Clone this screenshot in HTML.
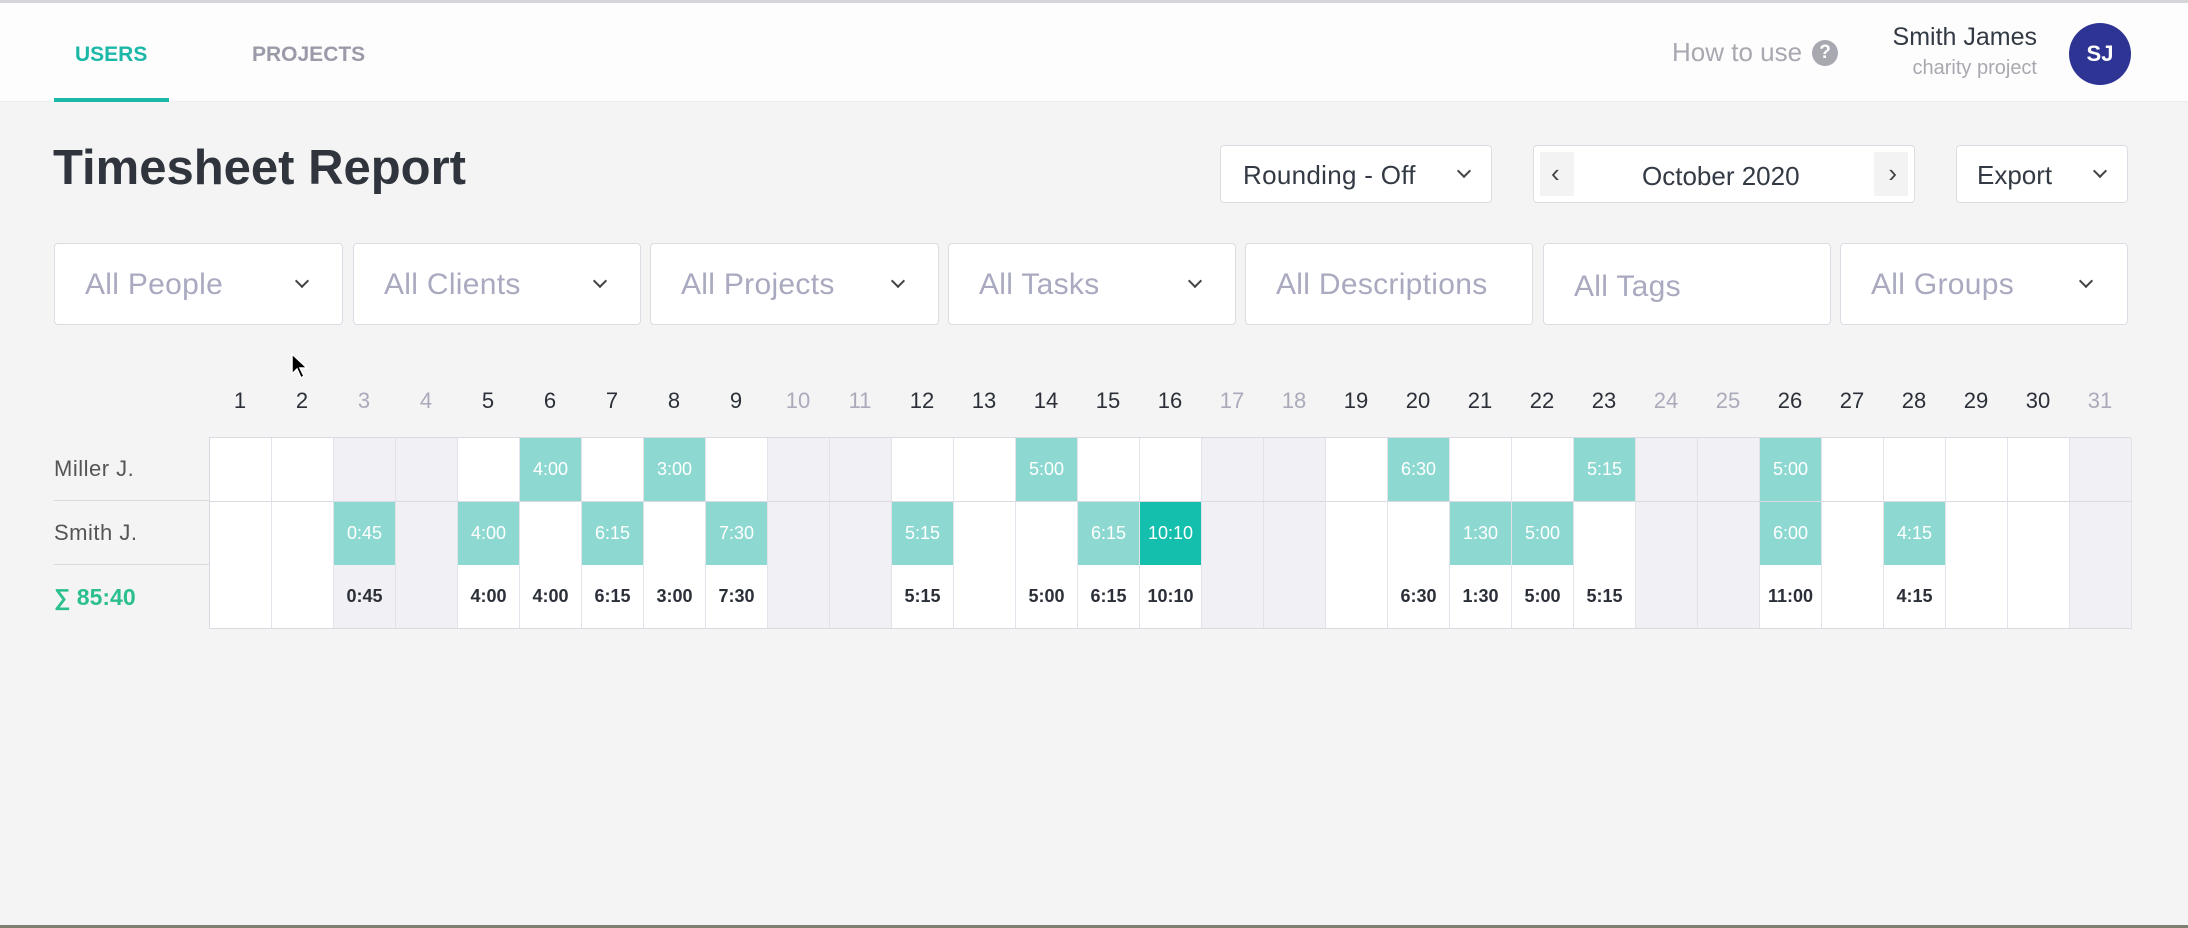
<!DOCTYPE html>
<html><head><meta charset="utf-8">
<style>
*{box-sizing:border-box;margin:0;padding:0}
body{width:2188px;height:928px;background:#f4f4f4;font-family:"Liberation Sans",sans-serif;position:relative;overflow:hidden;color:#333a44}
.hdr{position:absolute;left:0;top:0;width:2188px;height:102px;background:#fdfdfd;border-top:3px solid #d4d6da;border-bottom:1px solid #eee}
.a{position:absolute}
.box{position:absolute;background:#fff;border:1px solid #dcdce4;border-radius:4px}
.chev{position:absolute;width:10px;height:10px;border-right:2px solid #444;border-bottom:2px solid #444;transform:rotate(45deg)}
.f{font-size:30px;color:#a9a9c0;top:0;line-height:82px;left:30px;letter-spacing:.3px}
.grid{position:absolute;left:209px;width:1922px;display:grid;grid-template-columns:repeat(31,62px)}
.grid div{height:64px;border-right:1px solid #e2e2ea;border-bottom:1px solid #dadae2;background:#fff;display:flex;align-items:center;justify-content:center;font-size:18px;color:#fff}
.grid div.w{background:#f1f1f5}
.grid div.t{background:#8dd9d1}
.grid div.d{background:#14bfae}
.tot div{color:#2b2f38;font-weight:bold;font-size:18px}
.days{position:absolute;left:209px;top:388px;width:1922px;display:grid;grid-template-columns:repeat(31,62px)}
.days span{text-align:center;font-size:22px;color:#2b2f38}
.days span.w{color:#aab}
</style></head><body>
<div class="hdr">
 <div class="a" style="left:75px;top:40px;font-size:21px;color:#1bb8a8;font-weight:bold">USERS</div>
 <div class="a" style="left:54px;top:95px;width:115px;height:4px;background:#1bb8a8"></div>
 <div class="a" style="left:252px;top:40px;font-size:21px;color:#9a9aa8;font-weight:bold">PROJECTS</div>
 <div class="a" style="left:1672px;top:34px;font-size:26px;color:#a8a8b0">How to use</div>
 <div class="a" style="left:1812px;top:37px;width:26px;height:26px;border-radius:50%;background:#a8a8b0;color:#fff;font-size:19px;font-weight:bold;text-align:center;line-height:26px">?</div>
 <div class="a" style="right:151px;top:20px;font-size:25px;color:#333a44">Smith James</div>
 <div class="a" style="right:151px;top:54px;font-size:20px;color:#a8a8b0">charity project</div>
 <div class="a" style="left:2069px;top:20px;width:62px;height:62px;border-radius:50%;background:#2d3494;color:#fff;font-weight:bold;font-size:22px;text-align:center;line-height:62px">SJ</div>
</div>
<div class="a" style="left:53px;top:140px;font-size:49px;font-weight:bold;color:#2f343d">Timesheet Report</div>
<div class="box" style="left:1220px;top:145px;width:272px;height:58px"><span class="a" style="left:22px;top:14px;font-size:26px;letter-spacing:.3px">Rounding - Off</span><span class="chev" style="left:238px;top:20px"></span></div>
<div class="box" style="left:1533px;top:145px;width:382px;height:58px"><div class="a" style="left:6px;top:6px;width:34px;height:44px;background:#f3f3f3"></div><div class="a" style="right:6px;top:6px;width:34px;height:44px;background:#f3f3f3"></div><span class="a" style="left:17px;top:12px;font-size:26px;color:#444">‹</span><span class="a" style="right:17px;top:12px;font-size:26px;color:#444">›</span><span class="a" style="left:108px;top:15px;font-size:26px">October 2020</span></div>
<div class="box" style="left:1956px;top:145px;width:172px;height:58px"><span class="a" style="left:20px;top:14px;font-size:26px">Export</span><span class="chev" style="left:138px;top:20px"></span></div>
<div class="box" style="left:54px;top:243px;width:289px;height:82px"><span class="a f">All People</span><span class="chev" style="left:242px;top:32px"></span></div>
<div class="box" style="left:353px;top:243px;width:288px;height:82px"><span class="a f">All Clients</span><span class="chev" style="left:241px;top:32px"></span></div>
<div class="box" style="left:650px;top:243px;width:289px;height:82px"><span class="a f">All Projects</span><span class="chev" style="left:242px;top:32px"></span></div>
<div class="box" style="left:948px;top:243px;width:288px;height:82px"><span class="a f">All Tasks</span><span class="chev" style="left:241px;top:32px"></span></div>
<div class="box" style="left:1245px;top:243px;width:288px;height:82px"><span class="a f">All Descriptions</span></div>
<div class="box" style="left:1543px;top:243px;width:288px;height:82px"><span class="a f" style="top:2px">All Tags</span></div>
<div class="box" style="left:1840px;top:243px;width:288px;height:82px"><span class="a f">All Groups</span><span class="chev" style="left:240px;top:32px"></span></div>
<svg class="a" style="left:290px;top:352px" width="20" height="30" viewBox="0 0 20 30"><path d="M2 2 L2 22 L7 17 L11 26 L14 24 L10 16 L17 16 Z" fill="#000" stroke="#fff" stroke-width="1.5"/></svg>
<div class="days"><span>1</span><span>2</span><span class="w">3</span><span class="w">4</span><span>5</span><span>6</span><span>7</span><span>8</span><span>9</span><span class="w">10</span><span class="w">11</span><span>12</span><span>13</span><span>14</span><span>15</span><span>16</span><span class="w">17</span><span class="w">18</span><span>19</span><span>20</span><span>21</span><span>22</span><span>23</span><span class="w">24</span><span class="w">25</span><span>26</span><span>27</span><span>28</span><span>29</span><span>30</span><span class="w">31</span></div>
<div class="a" style="left:54px;top:437px;width:155px;height:192px">
 <div class="a" style="top:0;left:0;width:155px;height:64px;border-bottom:1px solid #dadae2;line-height:64px;font-size:22px;color:#555;letter-spacing:.5px">Miller J.</div>
 <div class="a" style="top:64px;left:0;width:155px;height:64px;border-bottom:1px solid #dadae2;line-height:64px;font-size:22px;color:#555;letter-spacing:.5px">Smith J.</div>
 <div class="a" style="top:128px;left:0;line-height:64px;font-size:23px;color:#2bbf8f;font-weight:bold">∑ 85:40</div>
</div>
<div class="grid" style="top:437px;border-top:1px solid #dadae2;border-left:1px solid #dadae2">
<div></div><div></div><div class="w"></div><div class="w"></div><div></div><div class="t">4:00</div><div></div><div class="t">3:00</div><div></div><div class="w"></div><div class="w"></div><div></div><div></div><div class="t">5:00</div><div></div><div></div><div class="w"></div><div class="w"></div><div></div><div class="t">6:30</div><div></div><div></div><div class="t">5:15</div><div class="w"></div><div class="w"></div><div class="t">5:00</div><div></div><div></div><div></div><div></div><div class="w"></div>
<div></div><div></div><div class="t">0:45</div><div class="w"></div><div class="t">4:00</div><div></div><div class="t">6:15</div><div></div><div class="t">7:30</div><div class="w"></div><div class="w"></div><div class="t">5:15</div><div></div><div></div><div class="t">6:15</div><div class="d">10:10</div><div class="w"></div><div class="w"></div><div></div><div></div><div class="t">1:30</div><div class="t">5:00</div><div></div><div class="w"></div><div class="w"></div><div class="t">6:00</div><div></div><div class="t">4:15</div><div></div><div></div><div class="w"></div>
</div>
<div class="grid tot" style="top:565px;border-left:1px solid #dadae2">
<div></div><div></div><div class="w">0:45</div><div class="w"></div><div>4:00</div><div>4:00</div><div>6:15</div><div>3:00</div><div>7:30</div><div class="w"></div><div class="w"></div><div>5:15</div><div></div><div>5:00</div><div>6:15</div><div>10:10</div><div class="w"></div><div class="w"></div><div></div><div>6:30</div><div>1:30</div><div>5:00</div><div>5:15</div><div class="w"></div><div class="w"></div><div>11:00</div><div></div><div>4:15</div><div></div><div></div><div class="w"></div>
</div>
<div class="a" style="left:0;top:925px;width:2188px;height:3px;background:#7c8070"></div>
</body></html>
